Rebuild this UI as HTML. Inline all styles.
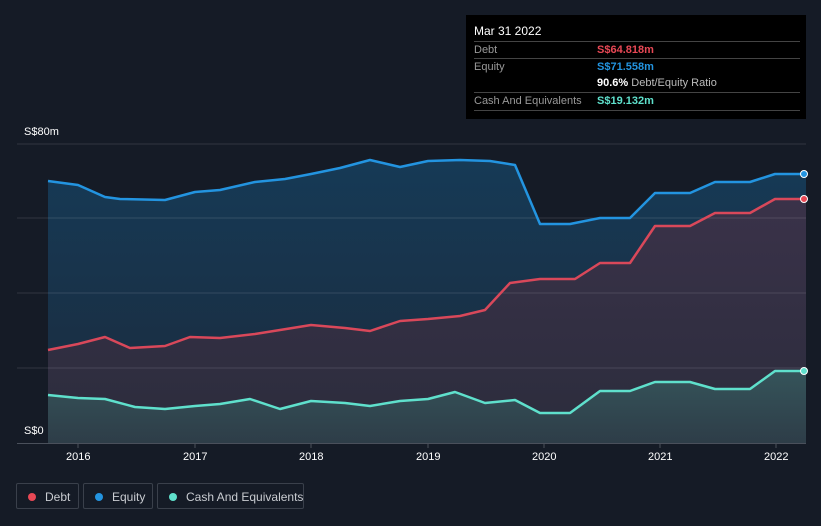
<!DOCTYPE html>
<html><head><style>
html,body{margin:0;width:821px;height:526px;overflow:hidden}
body{background:#151b26;font-family:"Liberation Sans",sans-serif;position:relative;white-space:nowrap}
.tt{position:absolute;left:466px;top:15px;width:340px;height:104px;background:#000;color:#fff;font-size:11px}
.tt .r{position:absolute;left:8px;width:326px;border-top:1px solid #444;height:17px;line-height:17px}
.g{color:#999}
.leg{position:absolute;top:483px;height:26px;border:1px solid #3a404b;border-radius:2px;color:#c9ccd1;font-size:12px;line-height:26px;box-sizing:border-box;white-space:nowrap}
.leg i{position:absolute;left:11px;top:9px;width:8px;height:8px;border-radius:50%}
.ax{position:absolute;color:#fff;font-size:11px}
</style></head><body>
<svg width="821" height="526" style="position:absolute;left:0;top:0">
<defs>
<linearGradient id="eq" x1="0" y1="0" x2="0" y2="1"><stop offset="0" stop-color="#163a56"/><stop offset="1" stop-color="#1b2a3c"/></linearGradient>
<linearGradient id="db" x1="0" y1="0" x2="0" y2="1"><stop offset="0" stop-color="#3a3249"/><stop offset="1" stop-color="#2b2c3c"/></linearGradient>
<linearGradient id="ch" x1="0" y1="0" x2="0" y2="1"><stop offset="0" stop-color="#35545a"/><stop offset="1" stop-color="#2e3d48"/></linearGradient>
</defs>
<path d="M48,181 78,185 105,197 120,199 165,200 195,192 220,190 255,182 285,179 311,174 340,168 370,160 400,167 428,161 460,160 490,161 515,165 540,224 570,224 600,218 630,218 655,193 690,193 715,182 750,182 775,174 806,174 L806,443 48,443Z" fill="url(#eq)"/>
<path d="M48,350 78,344 105,337 130,348 165,346 190,337 220,338 255,334 280,330 311,325 345,328 370,331 400,321 428,319 460,316 485,310 510,283 540,279 575,279 600,263 630,263 655,226 690,226 715,213 750,213 775,199 806,199 L806,443 48,443Z" fill="url(#db)"/>
<path d="M48,395 78,398 105,399 135,407 165,409 195,406 220,404 250,399 280,409 311,401 345,403 370,406 400,401 428,399 455,392 485,403 515,400 540,413 570,413 600,391 630,391 655,382 690,382 715,389 750,389 775,371 806,371 L806,443 48,443Z" fill="url(#ch)"/>
<g stroke="#fff" stroke-opacity=".12"><line x1="17" y1="144" x2="806" y2="144"/><line x1="17" y1="218" x2="806" y2="218"/><line x1="17" y1="293" x2="806" y2="293"/><line x1="17" y1="368" x2="806" y2="368"/></g>
<g fill="none" stroke-width="2.5" stroke-linejoin="round">
<polyline stroke="#2394e0" points="48,181 78,185 105,197 120,199 165,200 195,192 220,190 255,182 285,179 311,174 340,168 370,160 400,167 428,161 460,160 490,161 515,165 540,224 570,224 600,218 630,218 655,193 690,193 715,182 750,182 775,174 806,174"/>
<polyline stroke="#d9485a" points="48,350 78,344 105,337 130,348 165,346 190,337 220,338 255,334 280,330 311,325 345,328 370,331 400,321 428,319 460,316 485,310 510,283 540,279 575,279 600,263 630,263 655,226 690,226 715,213 750,213 775,199 806,199"/>
<polyline stroke="#5fe0cc" points="48,395 78,398 105,399 135,407 165,409 195,406 220,404 250,399 280,409 311,401 345,403 370,406 400,401 428,399 455,392 485,403 515,400 540,413 570,413 600,391 630,391 655,382 690,382 715,389 750,389 775,371 806,371"/>
</g>
<circle cx="804" cy="174" r="3.5" fill="#2394e0" stroke="#fff"/>
<circle cx="804" cy="199" r="3.5" fill="#e84855" stroke="#fff"/>
<circle cx="804" cy="371" r="3.5" fill="#5fe0cc" stroke="#fff"/>
<line x1="17" y1="443.5" x2="806" y2="443.5" stroke="#4a505b"/>
<g stroke="#4a505b"><line x1="78" y1="444" x2="78" y2="448"/><line x1="195" y1="444" x2="195" y2="448"/><line x1="311" y1="444" x2="311" y2="448"/><line x1="428" y1="444" x2="428" y2="448"/><line x1="544" y1="444" x2="544" y2="448"/><line x1="660" y1="444" x2="660" y2="448"/><line x1="776" y1="444" x2="776" y2="448"/></g>
<rect x="17" y="422" width="31" height="20" fill="#151b26"/>
</svg>
<div class="ax" style="left:24px;top:126px">S$80m</div>
<div class="ax" style="left:24px;top:425px">S$0</div>
<div class="ax" style="left:66px;top:451px">2016</div>
<div class="ax" style="left:183px;top:451px">2017</div>
<div class="ax" style="left:299px;top:451px">2018</div>
<div class="ax" style="left:416px;top:451px">2019</div>
<div class="ax" style="left:532px;top:451px">2020</div>
<div class="ax" style="left:648px;top:451px">2021</div>
<div class="ax" style="left:764px;top:451px">2022</div>
<div class="tt">
<div style="position:absolute;left:8px;top:9px;font-size:12px">Mar 31 2022</div>
<div class="r" style="top:26px"><span class="g">Debt</span><span style="position:absolute;left:123px;color:#e84855;font-weight:bold">S$64.818m</span></div>
<div class="r" style="top:43px"><span class="g">Equity</span><span style="position:absolute;left:123px;color:#2394e0;font-weight:bold">S$71.558m</span></div>
<div class="r" style="top:60px;border-top:none"><span style="position:absolute;left:123px"><b>90.6%</b> <span style="color:#bbb">Debt/Equity Ratio</span></span></div>
<div class="r" style="top:77px"><span class="g">Cash And Equivalents</span><span style="position:absolute;left:123px;color:#5fe0cc;font-weight:bold">S$19.132m</span></div>
<div class="r" style="top:95px;height:0"></div>
</div>
<div class="leg" style="left:16px;width:63px"><i style="background:#e84855"></i><span style="position:absolute;left:28px">Debt</span></div>
<div class="leg" style="left:83px;width:70px"><i style="background:#2394e0"></i><span style="position:absolute;left:28px">Equity</span></div>
<div class="leg" style="left:157px;width:147px"><i style="background:#5fe0cc"></i><span style="position:absolute;left:28px">Cash And Equivalents</span></div>
</body></html>
